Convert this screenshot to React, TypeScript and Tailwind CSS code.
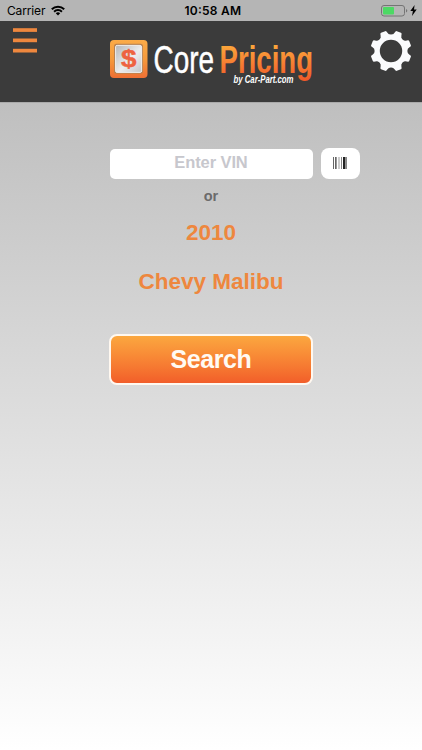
import React, { useState } from "react";

const teeth = [22.5, 67.5, 112.5, 157.5, 202.5, 247.5, 292.5, 337.5];

const bars = [
  { x: 0, w: 1, color: "#666" },
  { x: 2, w: 1, color: "#666" },
  { x: 3, w: 1, color: "#999" },
  { x: 5.5, w: 1, color: "#999" },
  { x: 8, w: 1, color: "#888" },
  { x: 10, w: 2.5, color: "#222" },
  { x: 13, w: 1, color: "#888" },
];

const StatusBar = () => (
  <div className="flex h-[21px] items-center justify-between bg-[#b5b5b5] pr-[5px] pl-[7px] text-black">
    <div className="flex w-[100px] items-center gap-1">
      <svg width="40" height="16" viewBox="0 0 40 16">
        <text x="0" y="12" fontSize="12" textLength="38.5" fontFamily="Inter, sans-serif">Carrier</text>
      </svg>
      <svg width="14" height="11" viewBox="0 0 14 11" fill="none" stroke="#000" strokeWidth="2">
        <path d="M0.8 4.2a8.8 8.8 0 0 1 12.4 0" />
        <path d="M3.1 6.7a5.5 5.5 0 0 1 7.8 0" />
        <path d="M7 10.5L4.8 8.3a3.1 3.1 0 0 1 4.4 0z" fill="#000" stroke="none" />
      </svg>
    </div>
    <svg width="60" height="16" viewBox="0 0 60 16">
      <text x="2.5" y="12" fontSize="12" fontWeight="600" textLength="56.5" fontFamily="Inter, sans-serif">10:58 AM</text>
    </svg>
    <div className="flex w-[100px] items-center justify-end gap-[2px]">
      <svg width="27" height="12" viewBox="0 0 27 12">
        <rect x="0.5" y="0.5" width="23" height="10.5" rx="2.5" fill="none" stroke="#747474" />
        <rect x="2" y="2" width="11" height="7.5" rx="1" fill="#4cd964" />
        <path d="M25 4v3.5q1.3-.5 1.3-1.75T25 4z" fill="#747474" />
      </svg>
      <svg width="7" height="11" viewBox="0 0 7 11">
        <path d="M4.6 0L0.3 6h2.6L2 11l4.7-6.4H4L4.6 0z" />
      </svg>
    </div>
  </div>
);

const Logo = () => (
  <svg className="overflow-visible" width="206" height="50" viewBox="0 0 206 50" fontFamily="'Liberation Sans Narrow', 'Liberation Sans', sans-serif">
    <defs>
      <linearGradient id="frame" x1="0" y1="0" x2="0" y2="1">
        <stop offset="0" stopColor="#fbab48" />
        <stop offset="0.5" stopColor="#f59a3c" />
        <stop offset="1" stopColor="#ee6f34" />
      </linearGradient>
      <linearGradient id="plate" x1="0" y1="0" x2="1" y2="1">
        <stop offset="0" stopColor="#b4b6b9" />
        <stop offset="0.55" stopColor="#ececee" />
        <stop offset="1" stopColor="#c4c6c8" />
      </linearGradient>
      <linearGradient id="word" gradientUnits="userSpaceOnUse" x1="0" y1="8" x2="0" y2="42">
        <stop offset="0" stopColor="#fba53b" />
        <stop offset="1" stopColor="#f15a29" />
      </linearGradient>
    </defs>
    <rect x="1" y="2" width="37.5" height="38" rx="4" fill="url(#frame)" />
    <rect x="5" y="5.8" width="29" height="30" rx="2.5" fill="#b98250" />
    <rect x="6.6" y="7.4" width="26" height="27" rx="1.5" fill="url(#plate)" stroke="#f0efef" strokeWidth="1" />
    <text x="12" y="28.8" fontSize="23" fontWeight="bold" textLength="15.5" lengthAdjust="spacingAndGlyphs" fill="#ee6240" stroke="#ee6240" strokeWidth="0.4" fontFamily="'Liberation Sans', sans-serif">$</text>
    <text x="44.5" y="35" fontSize="38" textLength="60.5" lengthAdjust="spacingAndGlyphs" fill="#fff" stroke="#fff" strokeWidth="0.5">Core</text>
    <text x="110.5" y="35" fontSize="38" fontWeight="bold" textLength="93.5" lengthAdjust="spacingAndGlyphs" fill="url(#word)">Pricing</text>
    <text x="124.5" y="45" fontSize="10" fontWeight="bold" fontStyle="italic" textLength="60" lengthAdjust="spacingAndGlyphs" fill="#fff">by Car-Part.com</text>
  </svg>
);

const Gear = () => (
  <svg width="42" height="42" viewBox="-21 -21 42 42">
    <circle r="13.8" fill="none" stroke="#fafbfd" strokeWidth="5.2" />
    {teeth.map(angle => (
      <path
        key={angle}
        transform={`rotate(${angle})`}
        d="M-6-15Q-4-16-3.6-18.5L-3.3-19.8Q-3-20.6-2.2-20.6H2.2Q3-20.6 3.3-19.8L3.6-18.5Q4-16 6-15z"
        fill="#fafbfd"
      />
    ))}
  </svg>
);

const App: React.FC = () => {
  const [vin, setVin] = useState("");

  return (
    <div className="flex h-[750px] w-full flex-col overflow-hidden font-['Liberation_Sans',sans-serif]">
      <StatusBar />
      {/* Header */}
      <header className="flex h-[81px] shrink-0 items-start justify-between bg-[#3b3b3b] pr-[10px] pl-[13px]">
        <button className="mt-[7px] w-[96px]" aria-label="Menu">
          <svg width="24" height="25" viewBox="0 0 24 25" fill="#ee873e">
            <rect y="0.2" width="24" height="3.7" />
            <rect y="10.5" width="24" height="3.7" />
            <rect y="20.8" width="24" height="3.7" />
          </svg>
        </button>
        <div className="mt-[17px]">
          <Logo />
        </div>
        <button className="mt-[9px] flex w-[97px] justify-end" aria-label="Settings">
          <Gear />
        </button>
      </header>
      {/* Search form */}
      <main className="flex grow flex-col items-center border-t border-[#aaa] bg-linear-to-b from-[#bfbfbf] to-white">
        <div className="mt-[45px] ml-[47px] flex items-center gap-2">
          <input
            className="h-[30px] w-[203px] rounded-[5px] bg-white pb-[2px] text-center text-[16.5px] font-bold tracking-[-0.1px] text-black outline-none placeholder:text-[#c7c7cd]"
            placeholder="Enter VIN"
            value={vin}
            onChange={e => setVin(e.target.value)}
          />
          <button className="flex h-[31px] w-[39px] items-center justify-center rounded-[8px] bg-white" aria-label="Scan">
            <svg className="mb-px" width="14" height="12" viewBox="0 0 14 12">
              {bars.map(bar => (
                <rect key={bar.x} x={bar.x} width={bar.w} height="12" fill={bar.color} />
              ))}
            </svg>
          </button>
        </div>
        <div className="mt-[7px] text-[14.5px] leading-5 font-bold text-[#6b6b6b]">or</div>
        <div className="mt-[13px] text-[22.5px] leading-7 font-bold text-[#ee873e]">2010</div>
        <div className="mt-[21px] text-[22.5px] leading-7 font-bold text-[#ee873e]">Chevy Malibu</div>
        <button className="mt-[38px] flex h-[51px] w-[204px] items-center justify-center rounded-[8px] border-2 border-[#fff8f0] bg-linear-to-b from-[#fbaa40] to-[#f15a29] bg-origin-border text-[25px] font-bold tracking-[-0.4px] text-[#fffaf3]">
          Search
        </button>
      </main>
    </div>
  );
};

export default App;
